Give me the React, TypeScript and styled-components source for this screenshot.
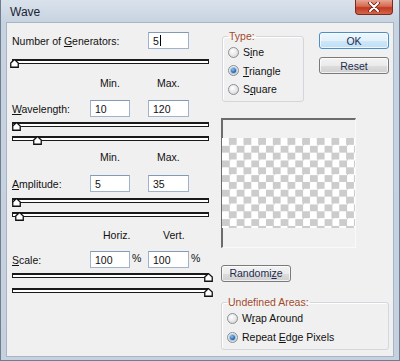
import styled, { createGlobalStyle } from "styled-components";

// ── globals ──────────────────────────────────────────────────────────────────

const Global = createGlobalStyle`
  html, body {
    margin: 0;
    padding: 0;
    background: #ffffff;
  }
  body {
    font-family: "Liberation Sans", Arial, sans-serif;
  }
  * { box-sizing: border-box; }
`;

// ── window chrome ────────────────────────────────────────────────────────────

const Window = styled.div`
  width: 400px;
  height: 361px;
  display: flex;
  flex-direction: column;
  padding: 0 5px 3px 5px;
  background: linear-gradient(#d9e2ec, #c8d3e1 22px, #c6d1df);
  border: 1px solid #6e7d90;
  border-top: none;
  font-size: 10.5px;
  color: #111;
`;

const TitleBar = styled.div`
  height: 22px;
  display: flex;
  align-items: flex-start;
  justify-content: space-between;
`;

const Title = styled.span`
  font-size: 12px;
  color: #1b2433;
  padding: 5px 0 0 4px;
`;

const CloseButton = styled.div`
  width: 38px;
  height: 15px;
  margin-right: 1px;
  border: 1px solid #7b2a1c;
  border-top: none;
  border-radius: 0 0 4px 4px;
  background: linear-gradient(#e7a594, #d46a52 45%, #c2391f 55%, #d2674d);
  display: flex;
  align-items: center;
  justify-content: center;
`;

const Client = styled.div`
  flex: 1;
  background: #f0f0f0;
  border: 1px solid #a9b5c4;
  padding: 7px 0 0 5px;
  display: flex;
  gap: 6px;
`;

// ── left column ──────────────────────────────────────────────────────────────

const LeftColumn = styled.div`
  width: 203px;
  display: flex;
  flex-direction: column;
`;

const FieldRow = styled.div<{ $mt: number }>`
  display: grid;
  grid-template-columns: 78px 40px 18px 41px 1fr;
  align-items: center;
  height: 17px;
  margin-top: ${(p) => p.$mt}px;
`;

const HeaderRow = styled(FieldRow)`
  height: 13px;
`;

const Label = styled.span<{ $span?: number }>`
  grid-column: span ${(p) => p.$span ?? 1};
  white-space: nowrap;
`;

const ColHead = styled.span<{ $col: number; $pad: number }>`
  grid-column: ${(p) => p.$col};
  padding-left: ${(p) => p.$pad}px;
  white-space: nowrap;
`;

const Key = styled.span`
  text-decoration: underline;
  text-underline-offset: 1px;
`;

const TextBox = styled.div`
  height: 17px;
  background: #ffffff;
  border: 1px solid #9fb3cc;
  border-top-color: #8299b8;
  padding-left: 4px;
  display: flex;
  align-items: center;
`;

const Caret = styled.span`
  display: inline-block;
  width: 1px;
  height: 11px;
  margin-left: 1px;
  background: #000;
`;

const Percent = styled.span`
  padding-left: 2px;
  margin-top: -3px;
`;

const Slider = styled.div<{ $mt: number }>`
  position: relative;
  width: 197px;
  height: 9px;
  margin-top: ${(p) => p.$mt}px;
`;

const Track = styled.div`
  height: 5px;
  background: #ffffff;
  border: 1px solid #1a1a1a;
  border-top-width: 2px;
`;

const Thumb = styled.svg<{ $x: number }>`
  position: absolute;
  top: 0;
  left: ${(p) => p.$x}px;
`;

function SliderBar({ mt, x }: { mt: number; x: number }) {
  return (
    <Slider $mt={mt}>
      <Track />
      <Thumb $x={x} width="9" height="9" viewBox="0 0 9 9">
        <polygon
          points="0.75,4 4.5,0.6 8.25,4 8.25,8.25 0.75,8.25"
          fill="#fff"
          stroke="#111"
          strokeWidth="1.3"
        />
      </Thumb>
    </Slider>
  );
}

// ── right column ─────────────────────────────────────────────────────────────

const RightColumn = styled.div`
  width: 168px;
  display: flex;
  flex-direction: column;
`;

const TopRow = styled.div`
  display: flex;
  align-items: flex-start;
  gap: 15px;
`;

const Group = styled.fieldset<{ $w: number; $ml?: number }>`
  width: ${(p) => p.$w}px;
  margin: 0 0 0 ${(p) => p.$ml ?? 0}px;
  padding: 0 0 2px 5px;
  border: 1px solid #d3d6da;
  border-radius: 3px;
  box-shadow: inset 1px 1px 0 #fff;
`;

const Legend = styled.legend`
  padding: 0 1px;
  color: #a34a2b;
  line-height: 13px;
`;

const RadioRow = styled.div<{ $h: number }>`
  height: ${(p) => p.$h}px;
  display: flex;
  align-items: center;
  gap: 4px;
`;

const RadioDot = styled.span<{ $on?: boolean }>`
  width: 11px;
  height: 11px;
  border-radius: 50%;
  border: 1px solid #8b8e92;
  background: radial-gradient(circle at 40% 35%, #ffffff, #e6e6e6 55%, #c9cbcf);
  display: flex;
  align-items: center;
  justify-content: center;

  &::after {
    content: "";
    display: ${(p) => (p.$on ? "block" : "none")};
    width: 5px;
    height: 5px;
    border-radius: 50%;
    background: radial-gradient(circle at 40% 35%, #8fc4f0, #2a64ad 60%, #153f7c);
    box-shadow: 0 0 0 1px #9ec4e8;
  }
`;

const ButtonStack = styled.div`
  display: flex;
  flex-direction: column;
  gap: 8px;
  margin-top: 2px;
`;

const Button = styled.div<{ $def?: boolean; $mt?: number }>`
  width: 70px;
  height: 17px;
  margin-top: ${(p) => p.$mt ?? 0}px;
  border: 1px solid ${(p) => (p.$def ? "#4a8fc6" : "#7a7a7a")};
  border-radius: 3px;
  background: ${(p) =>
    p.$def
      ? "linear-gradient(#eef7fd, #e2f1fb 50%, #cfe7f8 51%, #bfdff5)"
      : "linear-gradient(#f3f3f3, #ebebeb 50%, #dddddd 51%, #d0d0d0)"};
  box-shadow: inset 0 0 0 1px rgba(255, 255, 255, 0.7);
  display: flex;
  align-items: center;
  justify-content: center;
  color: #1d2d52;
`;

const Preview = styled.div`
  width: 135px;
  height: 130px;
  margin-top: 16px;
  padding-top: 18px;
  border-top: 2px solid #6c6c6c;
  border-left: 2px solid #6c6c6c;
  border-right: 1px solid #fafafa;
  border-bottom: 1px solid #fafafa;
  background: #f1f1f1;
`;

const Checker = styled.div`
  height: 90px;
  margin-left: -1px;
  background: repeating-conic-gradient(#cccccc 0 25%, #ffffff 0 50%) 0 0 / 14.66px 14.66px;
`;

const Spacer = styled.div<{ $h: number }>`
  height: ${(p) => p.$h}px;
`;

// ── component ────────────────────────────────────────────────────────────────

export default function App() {
  return (
    <>
      <Global />
      <Window>
        <TitleBar>
          <Title>Wave</Title>
          <CloseButton>
            <svg width="12" height="10" viewBox="0 0 12 10">
              <path d="M2 1 L10 9 M10 1 L2 9" stroke="#6a1e12" strokeWidth="3.6" strokeLinecap="round" />
              <path d="M2 1 L10 9 M10 1 L2 9" stroke="#ffffff" strokeWidth="2" strokeLinecap="round" />
            </svg>
          </CloseButton>
        </TitleBar>

        <Client>
          <LeftColumn>
            <FieldRow $mt={2}>
              <Label $span={3}>
                Number of <Key>G</Key>enerators:
              </Label>
              <TextBox>
                5<Caret />
              </TextBox>
            </FieldRow>
            <SliderBar mt={10} x={-2} />

            <HeaderRow $mt={8}>
              <ColHead $col={2} $pad={10}>Min.</ColHead>
              <ColHead $col={4} $pad={9}>Max.</ColHead>
            </HeaderRow>
            <FieldRow $mt={11}>
              <Label>
                <Key>W</Key>avelength:
              </Label>
              <TextBox>10</TextBox>
              <span />
              <TextBox>120</TextBox>
            </FieldRow>
            <SliderBar mt={5} x={0} />
            <SliderBar mt={5} x={21} />

            <HeaderRow $mt={5}>
              <ColHead $col={2} $pad={10}>Min.</ColHead>
              <ColHead $col={4} $pad={9}>Max.</ColHead>
            </HeaderRow>
            <FieldRow $mt={12}>
              <Label>
                <Key>A</Key>mplitude:
              </Label>
              <TextBox>5</TextBox>
              <span />
              <TextBox>35</TextBox>
            </FieldRow>
            <SliderBar mt={6} x={0} />
            <SliderBar mt={5} x={3} />

            <HeaderRow $mt={7}>
              <ColHead $col={2} $pad={13}>Horiz.</ColHead>
              <ColHead $col={4} $pad={15}>Vert.</ColHead>
            </HeaderRow>
            <FieldRow $mt={10}>
              <Label>
                <Key>S</Key>cale:
              </Label>
              <TextBox>100</TextBox>
              <Percent>%</Percent>
              <TextBox>100</TextBox>
              <Percent>%</Percent>
            </FieldRow>
            <SliderBar mt={5} x={192} />
            <SliderBar mt={6} x={192} />
          </LeftColumn>

          <RightColumn>
            <TopRow>
              <Group $w={82} $ml={1}>
                <Legend>Type:</Legend>
                <RadioRow $h={18.5}>
                  <RadioDot />
                  <span>
                    S<Key>i</Key>ne
                  </span>
                </RadioRow>
                <RadioRow $h={18.5}>
                  <RadioDot $on />
                  <span>
                    <Key>T</Key>riangle
                  </span>
                </RadioRow>
                <RadioRow $h={18.5}>
                  <RadioDot />
                  <span>
                    S<Key>q</Key>uare
                  </span>
                </RadioRow>
              </Group>
              <ButtonStack>
                <Button $def>OK</Button>
                <Button>Reset</Button>
              </ButtonStack>
            </TopRow>

            <Preview>
              <Checker />
            </Preview>

            <Button $mt={17}>
              <span>
                Randomi<Key>z</Key>e
              </span>
            </Button>

            <Spacer $h={14} />
            <Group $w={168}>
              <Legend>Undefined Areas:</Legend>
              <RadioRow $h={19}>
                <RadioDot />
                <span>
                  W<Key>r</Key>ap Around
                </span>
              </RadioRow>
              <RadioRow $h={19}>
                <RadioDot $on />
                <span>
                  Repeat <Key>E</Key>dge Pixels
                </span>
              </RadioRow>
            </Group>
          </RightColumn>
        </Client>
      </Window>
    </>
  );
}
